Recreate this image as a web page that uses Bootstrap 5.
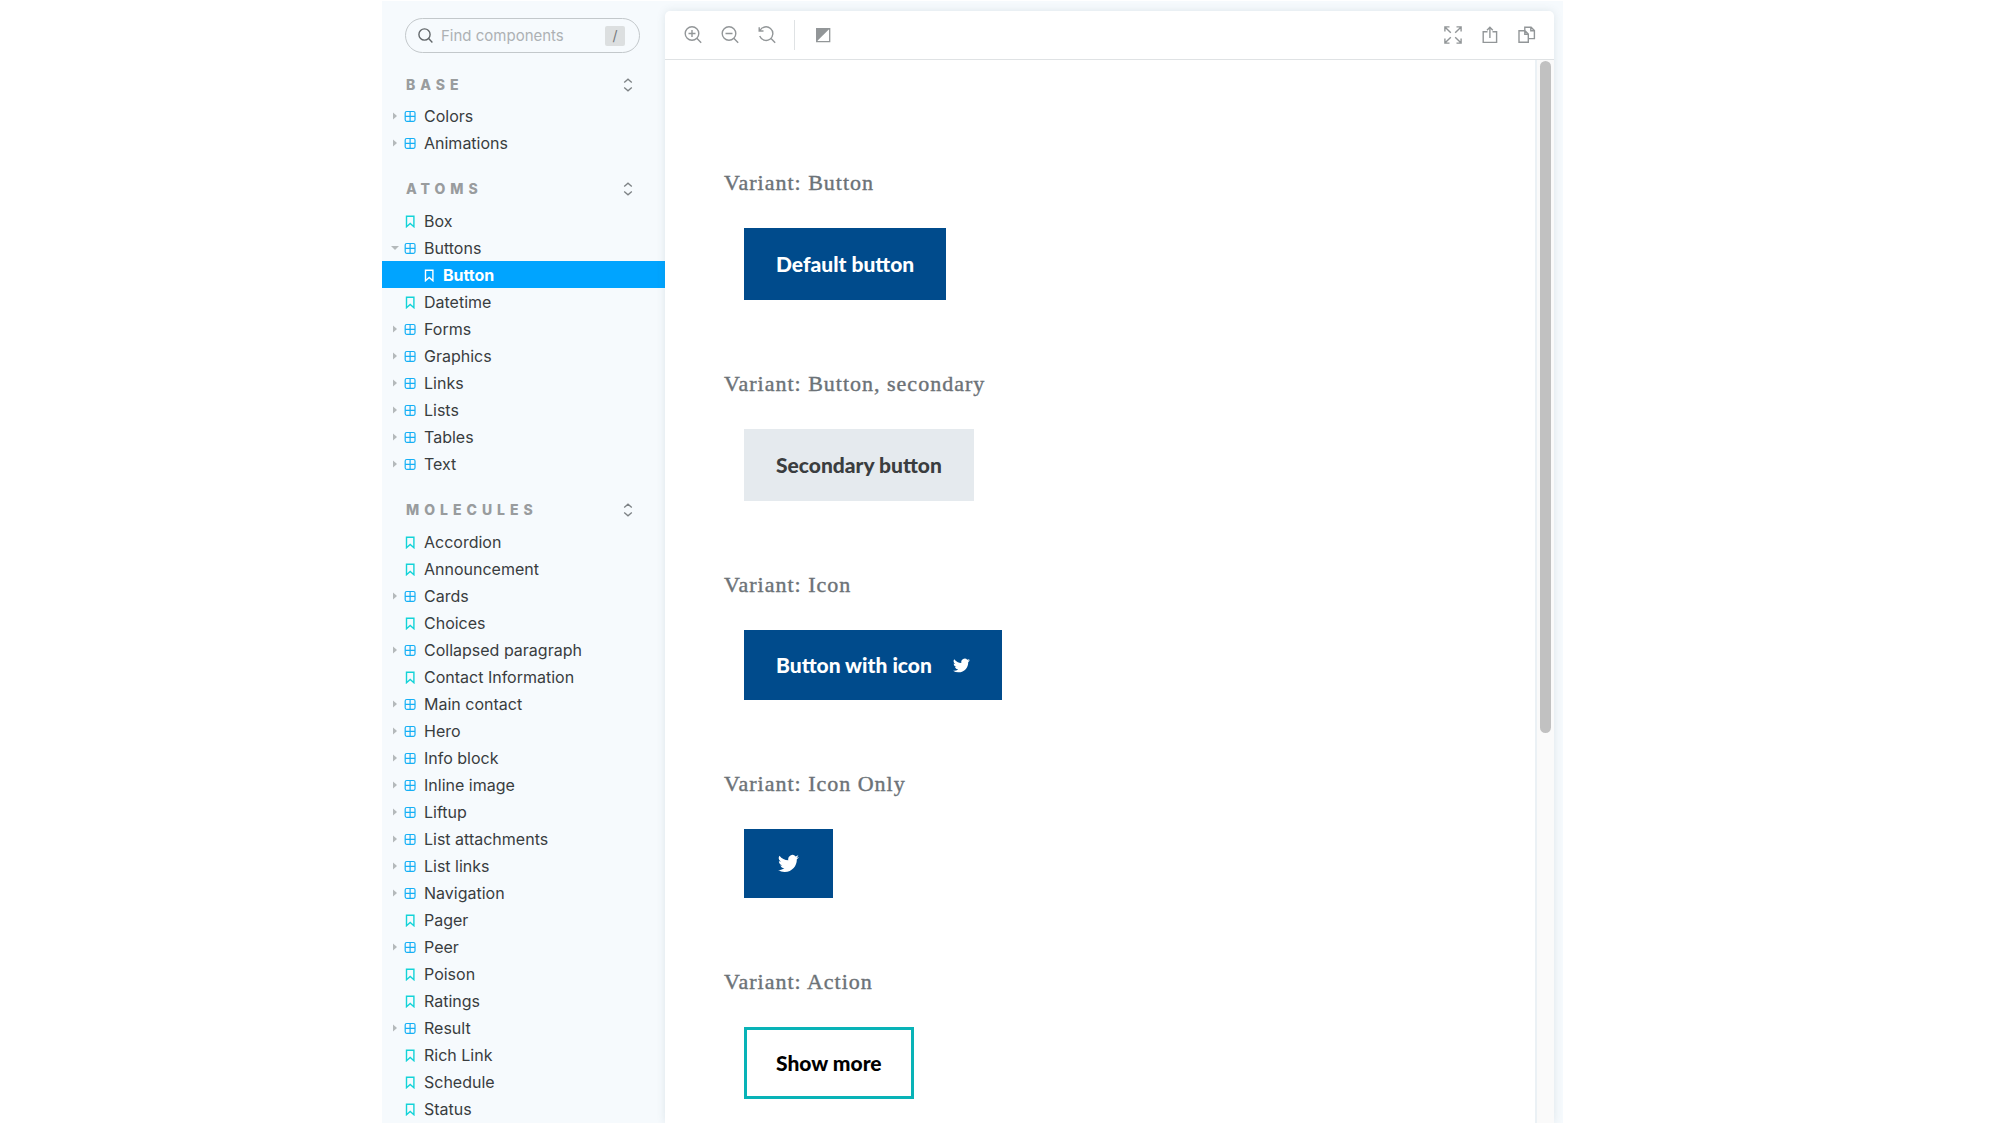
<!DOCTYPE html>
<html lang="en">
<head>
<meta charset="utf-8">
<meta name="viewport" content="width=device-width, initial-scale=1">
<title>Button – component library</title>
<link rel="stylesheet" href="https://cdn.jsdelivr.net/npm/bootstrap@5.3.0/dist/css/bootstrap.min.css">
<style>
  body { font-family: Inter, "Liberation Sans", sans-serif; color: #393d3f; background: #fff; }
  .page-frame { padding: 1px 437px 3px 382px; }
  .app-shell { background: #f6fafd; padding-right: 9px; }
  .side { width: 283px; }
  .search-box { height: 35px; margin: 17px 25px 0 23px; padding: 0 14px 0 12px; border: 1px solid #c3c8cb; }
  .search-box input { font-size: 15px; line-height: 20px; color: #393d3f; outline: 0; margin-left: 8px; }
  .search-box input::placeholder { color: #adb1b4; opacity: 1; }
  .search-box svg { width: 15px; height: 15px; color: #63686b; }
  .slash { width: 20px; height: 20px; font: 14px/20px Inter, sans-serif; color: #75797c; background: #dcdfe0; border-radius: 2px; padding: 0; }
  .group-head { height: 20px; margin: 22px 30px 7px 24px; }
  .group-head h2 { font-size: 14px; line-height: 20px; font-weight: 800; letter-spacing: 5px; color: #999c9e; }
  .group-head button { color: #7d8285; line-height: 0; }
  .group-head svg { width: 14px; height: 14px; }
  .tree + .group-head { margin-top: 23px; margin-bottom: 8px; }
  .tree a { height: 27px; padding-left: 9px; font-size: 16px; line-height: 26px; color: #393d3f; }
  .tree ul a { padding-left: 28px; }
  .tree a.current { background: #00a4ff; color: #fff; font-weight: 700; }
  .twist { width: 8px; height: 8px; margin-right: 5px; color: #b4b9bb; }
  .kind { width: 12px; height: 14px; margin-right: 8px; color: #16b0f5; }
  .kind.leaf { color: #13d3d8; }
  .current .kind { color: #fff; }
  .panel { margin-top: 10px; border-radius: 5px 5px 0 0; box-shadow: 0 0 9px rgba(60, 90, 110, .13); }
  .tools { height: 49px; padding: 0 18px 0 19px; border-bottom: 1px solid #dfe2e4; }
  .tools button { width: 18px; height: 18px; line-height: 0; color: #929698; }
  .tools svg { width: 18px; height: 18px; }
  .tool-set { gap: 19px; }
  .rule { width: 1px; height: 30px; background: #dfe2e4; margin: 0 19px 0 18px; }
  .stage { padding: 111px 59px 0; }
  .variant { margin-bottom: 72px; }
  .variant h3 { font: 22px/24px "Liberation Serif", serif; letter-spacing: 1px; color: #6c7277; -webkit-text-stroke: .4px; margin-bottom: 33px; }
  .variant .btn { font: 900 21px/24px Lato, sans-serif; margin-left: 20px; padding: 24px 32px; border: 0; border-radius: 0; }
  .variant .btn-brand { background: #004b8c; color: #fff; }
  .variant .btn-soft { background: #e5eaee; color: #3a3d3f; }
  .variant .btn-line { border: 3px solid #08b3b7; color: #000; padding: 21px 29px; }
  .variant .btn-slim { padding-top: 23px; padding-bottom: 23px; }
  .variant .btn-glyph { padding: 24px 34px; }
  .bird-small { width: 17px; height: 17px; margin-left: 21px; }
  .bird-large { width: 21px; height: 21px; }
  .bar-track { width: 19px; padding: 1px 3px; border-left: 2px solid #ebf1f5; background: #fafafa; }
  .bar-thumb { height: 63.3%; background: #c1c1c1; width: 11px; border-radius: 6px; }
  @media (max-width: 1400px) { .page-frame { padding-left: 0; padding-right: 0; } }
</style>
<script src="https://cdn.jsdelivr.net/npm/bootstrap@5.3.0/dist/js/bootstrap.bundle.min.js"></script>
</head>
<body>
<svg class="d-none" aria-hidden="true">
  <symbol id="i-right" viewBox="0 0 8 8"><path fill="currentColor" d="M2 .5 6 4 2 7.500z"/></symbol>
  <symbol id="i-down" viewBox="0 0 8 8"><path fill="currentColor" d="M0 2h8L4 6z"/></symbol>
  <symbol id="i-grid" viewBox="0 0 12 14"><g fill="none" stroke="currentColor" stroke-width="1.200"><rect x="1.200" y="2.500" width="9.800" height="9.800" rx="1.500"/><path d="M6.100 2.500v9.800M1.200 7.400H11"/></g></symbol>
  <symbol id="i-leaf" viewBox="0 0 12 14"><path fill="none" stroke="currentColor" stroke-width="1.400" d="M2.500 2.200h7.400v10.500L6.200 9.400l-3.700 3.300z"/></symbol>
  <symbol id="i-updown" viewBox="0 0 14 14"><path fill="none" stroke="currentColor" stroke-width="1.300" d="M3.200 4.600 7 1.200l3.800 3.400M3.200 9.400 7 12.800l3.800-3.400"/></symbol>
  <symbol id="i-bird" viewBox="0 0 24 24"><path fill="currentColor" d="M24 4.600a10 10 0 0 1-2.800.8 5 5 0 0 0 2.100-2.700c-.9.5-2 1-3.100 1.200a4.900 4.900 0 0 0-8.400 4.500A14 14 0 0 1 1.700 3.100a4.900 4.900 0 0 0 1.500 6.600 4.900 4.900 0 0 1-2.200-.6v.1a4.900 4.900 0 0 0 3.900 4.800 5 5 0 0 1-2.200.1 4.900 4.900 0 0 0 4.600 3.400A9.900 9.900 0 0 1 0 19.500a14 14 0 0 0 7.500 2.200c9.100 0 14-7.500 14-14v-.6A10 10 0 0 0 24 4.600z"/></symbol>
</svg>
<div class="page-frame vh-100 overflow-hidden">
<div class="app-shell d-flex h-100 overflow-hidden">
  <nav class="side flex-shrink-0" aria-label="Components">
    <form class="search-box d-flex align-items-center rounded-pill">
      <svg class="flex-shrink-0" viewBox="0 0 15 15" fill="none" stroke="currentColor" stroke-width="1.400"><circle cx="6.500" cy="6.500" r="5.600"/><path d="m10.600 10.600 3.800 3.800"/></svg>
      <input class="flex-grow-1 w-100 border-0 bg-transparent p-0" type="text" placeholder="Find components" aria-label="Find components">
      <kbd class="slash flex-shrink-0 text-center">/</kbd>
    </form>

    <div class="group-head d-flex align-items-center justify-content-between"><h2 class="m-0">BASE</h2><button class="border-0 bg-transparent p-0" type="button" aria-label="Collapse Base"><svg><use href="#i-updown"/></svg></button></div>
    <ul class="tree list-unstyled m-0">
      <li><a href="#" class="d-flex align-items-center text-decoration-none"><svg class="twist"><use href="#i-right"/></svg><svg class="kind"><use href="#i-grid"/></svg>Colors</a></li>
      <li><a href="#" class="d-flex align-items-center text-decoration-none"><svg class="twist"><use href="#i-right"/></svg><svg class="kind"><use href="#i-grid"/></svg>Animations</a></li>
    </ul>

    <div class="group-head d-flex align-items-center justify-content-between"><h2 class="m-0">ATOMS</h2><button class="border-0 bg-transparent p-0" type="button" aria-label="Collapse Atoms"><svg><use href="#i-updown"/></svg></button></div>
    <ul class="tree list-unstyled m-0">
      <li><a href="#" class="d-flex align-items-center text-decoration-none"><span class="twist"></span><svg class="kind leaf"><use href="#i-leaf"/></svg>Box</a></li>
      <li><a href="#" class="d-flex align-items-center text-decoration-none"><svg class="twist"><use href="#i-down"/></svg><svg class="kind"><use href="#i-grid"/></svg>Buttons</a>
        <ul class="list-unstyled m-0">
          <li><a href="#" class="current d-flex align-items-center text-decoration-none" aria-current="page"><span class="twist"></span><svg class="kind leaf"><use href="#i-leaf"/></svg>Button</a></li>
        </ul>
      </li>
      <li><a href="#" class="d-flex align-items-center text-decoration-none"><span class="twist"></span><svg class="kind leaf"><use href="#i-leaf"/></svg>Datetime</a></li>
      <li><a href="#" class="d-flex align-items-center text-decoration-none"><svg class="twist"><use href="#i-right"/></svg><svg class="kind"><use href="#i-grid"/></svg>Forms</a></li>
      <li><a href="#" class="d-flex align-items-center text-decoration-none"><svg class="twist"><use href="#i-right"/></svg><svg class="kind"><use href="#i-grid"/></svg>Graphics</a></li>
      <li><a href="#" class="d-flex align-items-center text-decoration-none"><svg class="twist"><use href="#i-right"/></svg><svg class="kind"><use href="#i-grid"/></svg>Links</a></li>
      <li><a href="#" class="d-flex align-items-center text-decoration-none"><svg class="twist"><use href="#i-right"/></svg><svg class="kind"><use href="#i-grid"/></svg>Lists</a></li>
      <li><a href="#" class="d-flex align-items-center text-decoration-none"><svg class="twist"><use href="#i-right"/></svg><svg class="kind"><use href="#i-grid"/></svg>Tables</a></li>
      <li><a href="#" class="d-flex align-items-center text-decoration-none"><svg class="twist"><use href="#i-right"/></svg><svg class="kind"><use href="#i-grid"/></svg>Text</a></li>
    </ul>

    <div class="group-head d-flex align-items-center justify-content-between"><h2 class="m-0">MOLECULES</h2><button class="border-0 bg-transparent p-0" type="button" aria-label="Collapse Molecules"><svg><use href="#i-updown"/></svg></button></div>
    <ul class="tree list-unstyled m-0">
      <li><a href="#" class="d-flex align-items-center text-decoration-none"><span class="twist"></span><svg class="kind leaf"><use href="#i-leaf"/></svg>Accordion</a></li>
      <li><a href="#" class="d-flex align-items-center text-decoration-none"><span class="twist"></span><svg class="kind leaf"><use href="#i-leaf"/></svg>Announcement</a></li>
      <li><a href="#" class="d-flex align-items-center text-decoration-none"><svg class="twist"><use href="#i-right"/></svg><svg class="kind"><use href="#i-grid"/></svg>Cards</a></li>
      <li><a href="#" class="d-flex align-items-center text-decoration-none"><span class="twist"></span><svg class="kind leaf"><use href="#i-leaf"/></svg>Choices</a></li>
      <li><a href="#" class="d-flex align-items-center text-decoration-none"><svg class="twist"><use href="#i-right"/></svg><svg class="kind"><use href="#i-grid"/></svg>Collapsed paragraph</a></li>
      <li><a href="#" class="d-flex align-items-center text-decoration-none"><span class="twist"></span><svg class="kind leaf"><use href="#i-leaf"/></svg>Contact Information</a></li>
      <li><a href="#" class="d-flex align-items-center text-decoration-none"><svg class="twist"><use href="#i-right"/></svg><svg class="kind"><use href="#i-grid"/></svg>Main contact</a></li>
      <li><a href="#" class="d-flex align-items-center text-decoration-none"><svg class="twist"><use href="#i-right"/></svg><svg class="kind"><use href="#i-grid"/></svg>Hero</a></li>
      <li><a href="#" class="d-flex align-items-center text-decoration-none"><svg class="twist"><use href="#i-right"/></svg><svg class="kind"><use href="#i-grid"/></svg>Info block</a></li>
      <li><a href="#" class="d-flex align-items-center text-decoration-none"><svg class="twist"><use href="#i-right"/></svg><svg class="kind"><use href="#i-grid"/></svg>Inline image</a></li>
      <li><a href="#" class="d-flex align-items-center text-decoration-none"><svg class="twist"><use href="#i-right"/></svg><svg class="kind"><use href="#i-grid"/></svg>Liftup</a></li>
      <li><a href="#" class="d-flex align-items-center text-decoration-none"><svg class="twist"><use href="#i-right"/></svg><svg class="kind"><use href="#i-grid"/></svg>List attachments</a></li>
      <li><a href="#" class="d-flex align-items-center text-decoration-none"><svg class="twist"><use href="#i-right"/></svg><svg class="kind"><use href="#i-grid"/></svg>List links</a></li>
      <li><a href="#" class="d-flex align-items-center text-decoration-none"><svg class="twist"><use href="#i-right"/></svg><svg class="kind"><use href="#i-grid"/></svg>Navigation</a></li>
      <li><a href="#" class="d-flex align-items-center text-decoration-none"><span class="twist"></span><svg class="kind leaf"><use href="#i-leaf"/></svg>Pager</a></li>
      <li><a href="#" class="d-flex align-items-center text-decoration-none"><svg class="twist"><use href="#i-right"/></svg><svg class="kind"><use href="#i-grid"/></svg>Peer</a></li>
      <li><a href="#" class="d-flex align-items-center text-decoration-none"><span class="twist"></span><svg class="kind leaf"><use href="#i-leaf"/></svg>Poison</a></li>
      <li><a href="#" class="d-flex align-items-center text-decoration-none"><span class="twist"></span><svg class="kind leaf"><use href="#i-leaf"/></svg>Ratings</a></li>
      <li><a href="#" class="d-flex align-items-center text-decoration-none"><svg class="twist"><use href="#i-right"/></svg><svg class="kind"><use href="#i-grid"/></svg>Result</a></li>
      <li><a href="#" class="d-flex align-items-center text-decoration-none"><span class="twist"></span><svg class="kind leaf"><use href="#i-leaf"/></svg>Rich Link</a></li>
      <li><a href="#" class="d-flex align-items-center text-decoration-none"><span class="twist"></span><svg class="kind leaf"><use href="#i-leaf"/></svg>Schedule</a></li>
      <li><a href="#" class="d-flex align-items-center text-decoration-none"><span class="twist"></span><svg class="kind leaf"><use href="#i-leaf"/></svg>Status</a></li>
    </ul>
  </nav>

  <main class="panel d-flex flex-column flex-grow-1 bg-white overflow-hidden">
    <div class="tools d-flex align-items-center flex-shrink-0">
      <div class="tool-set d-flex">
        <button class="border-0 bg-transparent p-0" type="button" aria-label="Zoom in"><svg viewBox="0 0 18 18" fill="none" stroke="currentColor" stroke-width="1.400"><circle cx="8" cy="7.500" r="6.800"/><path d="m12.800 12.300 4.400 4.500M4.500 7.500h7M8 4v7"/></svg></button>
        <button class="border-0 bg-transparent p-0" type="button" aria-label="Zoom out"><svg viewBox="0 0 18 18" fill="none" stroke="currentColor" stroke-width="1.400"><circle cx="8" cy="7.500" r="6.800"/><path d="m12.800 12.300 4.400 4.500M4.500 7.500h7"/></svg></button>
        <button class="border-0 bg-transparent p-0" type="button" aria-label="Reset zoom"><svg viewBox="0 0 18 18" fill="none" stroke="currentColor" stroke-width="1.400"><path d="M2 4.500a6.800 6.800 0 1 1-.3 5.600M12.800 12.300l4.400 4.500M1.200 1.200v3.800h4.300"/></svg></button>
      </div>
      <div class="rule"></div>
      <button class="border-0 bg-transparent p-0" type="button" aria-label="Change background"><svg viewBox="0 0 18 18"><path fill="none" stroke="currentColor" stroke-width="1.300" d="M2.700 2.700h13v13h-13z"/><path fill="currentColor" d="M2.200 2.200H16L2.200 16z"/></svg></button>
      <div class="tool-set d-flex ms-auto">
        <button class="border-0 bg-transparent p-0" type="button" aria-label="Full screen"><svg viewBox="0 0 18 18" fill="none" stroke="currentColor" stroke-width="1.400"><path d="M.9 5.500V.9h4.600M.9.9l5.900 5.900M12.500.9h4.600v4.600M17.100.9l-5.900 5.900M.9 12.500v4.600h4.600M.9 17.100l5.900-5.900M12.500 17.100h4.600v-4.600M17.100 17.100l-5.900-5.900"/></svg></button>
        <button class="border-0 bg-transparent p-0" type="button" aria-label="Share"><svg viewBox="0 0 18 18" fill="none" stroke="currentColor" stroke-width="1.400"><path d="M6.500 5.800H2.200v10.600h13.400V5.800h-4.100M8.900 12V1.500M6 4.200l2.900-2.900 2.900 2.900"/></svg></button>
        <button class="border-0 bg-transparent p-0" type="button" aria-label="Copy"><svg viewBox="0 0 18 18" fill="none" stroke="currentColor" stroke-width="1.400"><path d="M1 4.800h6l3.300 3.300v8.200H1zM6.800 4.800v3.500h3.500M6.800 4.500V1.200h6.300l3.300 3.400v8h-5.700M12.800 1.200v3.600h3.600"/></svg></button>
      </div>
    </div>
    <div class="d-flex flex-grow-1 overflow-hidden">
      <div class="stage flex-grow-1 overflow-hidden">
        <section class="variant"><h3>Variant: Button</h3><button class="btn btn-brand d-block" type="button">Default button</button></section>
        <section class="variant"><h3>Variant: Button, secondary</h3><button class="btn btn-soft d-block" type="button">Secondary button</button></section>
        <section class="variant"><h3>Variant: Icon</h3><button class="btn btn-brand btn-slim d-flex align-items-center" type="button">Button with icon<svg class="bird-small"><use href="#i-bird"/></svg></button></section>
        <section class="variant"><h3>Variant: Icon Only</h3><button class="btn btn-brand btn-glyph d-flex" type="button" aria-label="Twitter"><svg class="bird-large"><use href="#i-bird"/></svg></button></section>
        <section class="variant"><h3>Variant: Action</h3><button class="btn btn-line d-block" type="button">Show more</button></section>
      </div>
      <div class="bar-track flex-shrink-0"><div class="bar-thumb"></div></div>
    </div>
  </main>
</div>
</div>
</body>
</html>
